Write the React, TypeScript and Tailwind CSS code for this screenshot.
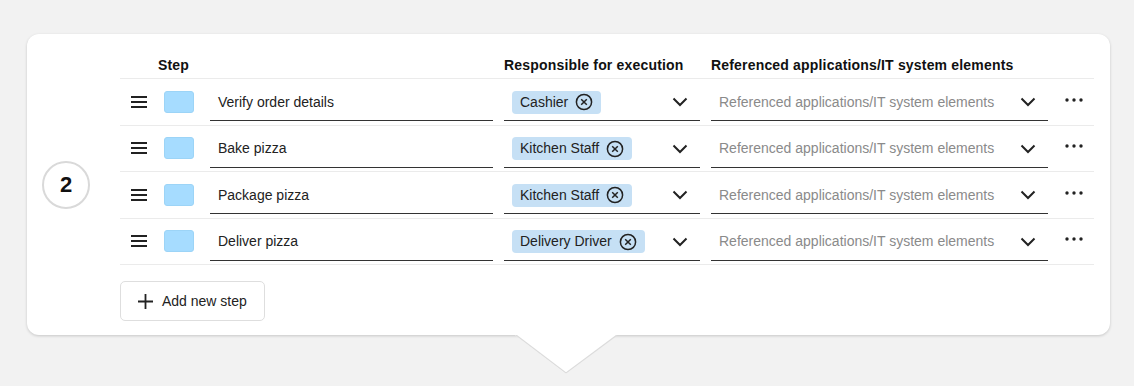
import React from "react";

const rows = [
  { step: "Verify order details", role: "Cashier" },
  { step: "Bake pizza", role: "Kitchen Staff" },
  { step: "Package pizza", role: "Kitchen Staff" },
  { step: "Deliver pizza", role: "Delivery Driver" },
];

function Hamburger() {
  return (
    <svg width="16" height="12" viewBox="0 0 16 12" className="block">
      <rect x="0" y="0" width="16" height="2" fill="#222" />
      <rect x="0" y="5" width="16" height="2" fill="#222" />
      <rect x="0" y="10" width="16" height="2" fill="#222" />
    </svg>
  );
}

function Chevron() {
  return (
    <svg width="16" height="10" viewBox="0 0 16 10" className="block">
      <path d="M1.5 1.5 L8 8 L14.5 1.5" fill="none" stroke="#222" strokeWidth="2" />
    </svg>
  );
}

function CircleX() {
  return (
    <svg width="18" height="18" viewBox="0 0 18 18" className="block">
      <circle cx="9" cy="9" r="7.6" fill="none" stroke="#222" strokeWidth="1.5" />
      <path d="M6.2 6.2 L11.8 11.8 M11.8 6.2 L6.2 11.8" stroke="#222" strokeWidth="1.5" />
    </svg>
  );
}

function Dots() {
  return (
    <svg width="18" height="4" viewBox="0 0 18 4" className="block">
      <circle cx="2" cy="2" r="1.7" fill="#222" />
      <circle cx="9" cy="2" r="1.7" fill="#222" />
      <circle cx="16" cy="2" r="1.7" fill="#222" />
    </svg>
  );
}

export default function App() {
  return (
    <div
      className="w-[1134px] h-[386px] bg-[#f2f2f2] pt-[34px] pl-[27px]"
      style={{ fontFamily: '"Liberation Sans", Arial, sans-serif' }}
    >
      <div className="relative w-[1083px] h-[301px] bg-white rounded-[12px] shadow-[0_1px_3px_rgba(0,0,0,0.18)] flex">
        <div className="w-[93px] flex items-center pl-[15px]">
          <div className="w-[48px] h-[48px] rounded-full border-2 border-[#d9d9d9] flex items-center justify-center text-[22px] font-bold text-[#111]">
            2
          </div>
        </div>
        <div className="flex flex-col pt-[18px]">
          <div className="flex items-center h-[27px] border-b border-[#ebebeb] w-[974px] text-[14px] font-bold tracking-[0.18px] text-[#111]">
            <div className="w-[38px]" />
            <div className="w-[346px]">Step</div>
            <div className="w-[207px]">Responsible for execution</div>
            <div>Referenced applications/IT system elements</div>
          </div>
          {rows.map((r, i) => (
            <div key={i} className="flex items-center h-[46.5px] border-b border-[#ebebeb] w-[974px]">
              <div className="w-[11px]" />
              <Hamburger />
              <div className="w-[17px]" />
              <div className="w-[30px] h-[22px] rounded-[3px] bg-[#a6dcff] border border-[#9cd4f7]" />
              <div className="w-[16px]" />
              <div className="w-[283px] h-[34px] mt-[5px] border-b border-[#333] flex items-center pl-[8px] text-[14px] text-[#222] pb-[3px]">
                {r.step}
              </div>
              <div className="w-[11px]" />
              <div className="w-[196px] h-[34px] mt-[5px] border-b border-[#333] flex items-center pl-[8px] pr-[12px] pb-[3px]">
                <div className="flex items-center gap-[7px] h-[23px] rounded-[4px] bg-[#c6e0f5] pl-[8px] pr-[8px] text-[14px] text-[#222]">
                  <span>{r.role}</span>
                  <CircleX />
                </div>
                <div className="flex-1" />
                <Chevron />
              </div>
              <div className="w-[11px]" />
              <div className="w-[337px] h-[34px] mt-[5px] border-b border-[#333] flex items-center pl-[8px] pr-[12px] pb-[3px]">
                <span className="text-[14px] text-[#8a8a8a]">Referenced applications/IT system elements</span>
                <div className="flex-1" />
                <Chevron />
              </div>
              <div className="w-[17px]" />
              <div className="-mt-[4px]">
                <Dots />
              </div>
            </div>
          ))}
          <div className="mt-[16px]">
            <button className="h-[40px] w-[145px] border border-[#dedede] rounded-[5px] flex items-center pl-[16px] gap-[8px] text-[14px] text-[#222] bg-white">
              <svg width="17" height="17" viewBox="0 0 17 17" className="block">
                <path d="M8.5 1 V16 M1 8.5 H16" stroke="#222" strokeWidth="1.8" />
              </svg>
              <span>Add new step</span>
            </button>
          </div>
        </div>
        <svg
          width="104"
          height="44"
          viewBox="0 0 104 44"
          className="absolute left-[488px] top-[298px]"
        >
          <polygon points="0,3 102,3 51,42" fill="white" />
          <path d="M1 3 L51 41 L102 3" fill="none" stroke="#dcdcdc" strokeWidth="1.2" />
          <rect x="0" y="0" width="104" height="3" fill="white" />
        </svg>
      </div>
    </div>
  );
}
